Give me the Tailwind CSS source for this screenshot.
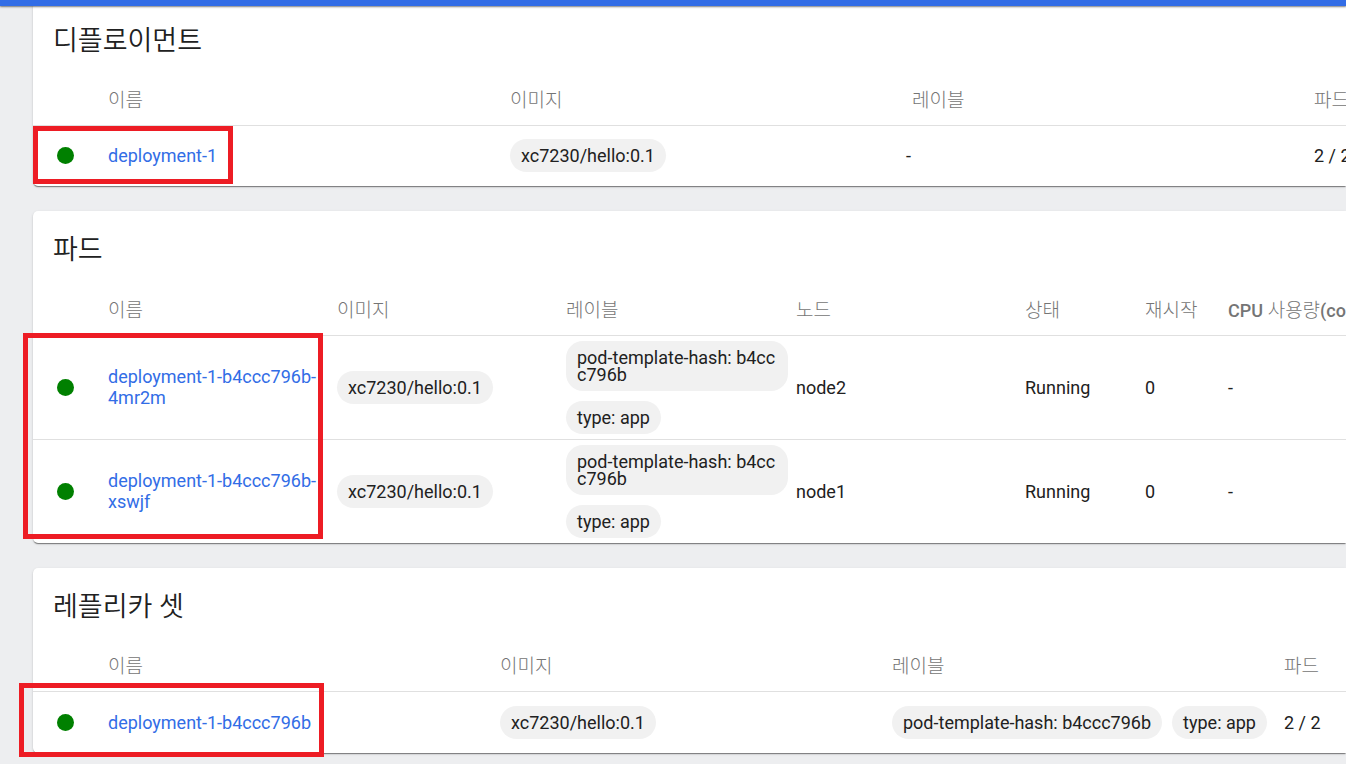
<!DOCTYPE html>
<html lang="ko">
<head>
<meta charset="utf-8">
<meta name="viewport" content="width=device-width, initial-scale=1">
<title>Kubernetes Dashboard</title>
<script src="https://cdn.jsdelivr.net/npm/@tailwindcss/browser@4"></script>
</head>
<body class="relative h-screen overflow-hidden bg-[#edeef0] font-[Roboto,'Noto_Sans_CJK_KR',sans-serif] text-[18px] leading-[21px] text-[#212121]">
<header class="absolute inset-x-0 top-0 z-10 h-[6px] bg-[#326de6] shadow-[0_1px_2px_rgba(0,0,0,0.5)]"></header>
<main class="flex flex-col gap-[25px] pt-[2px] pl-[33px]">

  <section class="relative rounded-l-[5px] bg-white shadow-[0_2px_1px_-1px_rgba(0,0,0,0.3),0_1px_1px_rgba(0,0,0,0.2),0_1px_3px_rgba(0,0,0,0.12)]">
    <h2 class="flex h-[74px] items-center pt-1 pl-5 text-[27px] font-[350]">디플로이먼트</h2>
    <div class="overflow-hidden">
      <table class="w-[1440px] table-fixed border-collapse text-left">
        <colgroup><col class="w-[75px]"><col class="w-[402px]"><col class="w-[396px]"><col class="w-[408px]"><col></colgroup>
        <thead class="text-[19px] text-[#757575]">
          <tr class="h-[49px] border-b border-[#e0e0e0]"><td></td><th class="font-light">이름</th><th class="font-light">이미지</th><th class="pl-[6px] font-light">레이블</th><th class="font-light">파드</th></tr>
        </thead>
        <tbody>
          <tr class="h-[61px]">
            <td class="pl-6"><span class="block size-[17px] rounded-full bg-[#008000]"></span></td>
            <td><a href="#" class="text-[#326de6]">deployment-1</a></td>
            <td><span class="block w-fit rounded-[17px] bg-[#f1f1f1] px-[11px] py-2 leading-[17px]">xc7230/hello:0.1</span></td>
            <td>-</td>
            <td>2 / 2</td>
          </tr>
        </tbody>
      </table>
    </div>
    <div class="pointer-events-none absolute top-[124px] left-0 h-[58px] w-[200px] border-5 border-[#ed1c24]"></div>
  </section>

  <section class="relative rounded-l-[5px] bg-white shadow-[0_2px_1px_-1px_rgba(0,0,0,0.3),0_1px_1px_rgba(0,0,0,0.2),0_1px_3px_rgba(0,0,0,0.12)]">
    <h2 class="flex h-[75px] items-center pt-1 pl-5 text-[27px] font-[350]">파드</h2>
    <div class="overflow-hidden">
      <table class="w-[1440px] table-fixed border-collapse text-left">
        <colgroup><col class="w-[75px]"><col class="w-[229px]"><col class="w-[229px]"><col class="w-[230px]"><col class="w-[229px]"><col class="w-[120px]"><col class="w-[83px]"><col></colgroup>
        <thead class="text-[19px] text-[#757575]">
          <tr class="h-[49px] border-b border-[#e0e0e0]"><td></td><th class="font-light">이름</th><th class="font-light">이미지</th><th class="font-light">레이블</th><th class="font-light">노드</th><th class="font-light">상태</th><th class="font-light">재시작</th><th class="font-light whitespace-nowrap"><span class="text-[18px] font-medium">CPU</span> 사용량<span class="text-[18px] font-medium">(cores)</span></th></tr>
        </thead>
        <tbody>
          <tr class="h-[104px] border-b border-[#e0e0e0]">
            <td class="pl-6"><span class="block size-[17px] rounded-full bg-[#008000]"></span></td>
            <td class="pr-[10px]"><a href="#" class="text-[#326de6]">deployment-1-b4ccc796b-<br>4mr2m</a></td>
            <td><span class="block w-fit rounded-[17px] bg-[#f1f1f1] px-[11px] py-2 leading-[17px]">xc7230/hello:0.1</span></td>
            <td class="pr-2"><div class="flex flex-col items-start gap-[10px]"><span class="rounded-[17px] bg-[#f1f1f1] px-[11px] py-2 leading-[17px] break-all">pod-template-hash: b4ccc796b</span><span class="rounded-[17px] bg-[#f1f1f1] px-[11px] py-2 leading-[17px]">type: app</span></div></td>
            <td>node2</td><td>Running</td><td>0</td><td>-</td>
          </tr>
          <tr class="h-[104px]">
            <td class="pl-6"><span class="block size-[17px] rounded-full bg-[#008000]"></span></td>
            <td class="pr-[10px]"><a href="#" class="text-[#326de6]">deployment-1-b4ccc796b-<br>xswjf</a></td>
            <td><span class="block w-fit rounded-[17px] bg-[#f1f1f1] px-[11px] py-2 leading-[17px]">xc7230/hello:0.1</span></td>
            <td class="pr-2"><div class="flex flex-col items-start gap-[10px]"><span class="rounded-[17px] bg-[#f1f1f1] px-[11px] py-2 leading-[17px] break-all">pod-template-hash: b4ccc796b</span><span class="rounded-[17px] bg-[#f1f1f1] px-[11px] py-2 leading-[17px]">type: app</span></div></td>
            <td>node1</td><td>Running</td><td>0</td><td>-</td>
          </tr>
        </tbody>
      </table>
    </div>
    <div class="pointer-events-none absolute top-[122px] -left-[10px] h-[206px] w-[300px] border-5 border-[#ed1c24]"></div>
  </section>

  <section class="relative rounded-l-[5px] bg-white shadow-[0_2px_1px_-1px_rgba(0,0,0,0.3),0_1px_1px_rgba(0,0,0,0.2),0_1px_3px_rgba(0,0,0,0.12)]">
    <h2 class="flex h-[74px] items-center pt-1 pl-5 text-[27px] font-[350]">레플리카 셋</h2>
    <div class="overflow-hidden">
      <table class="w-[1440px] table-fixed border-collapse text-left">
        <colgroup><col class="w-[75px]"><col class="w-[392px]"><col class="w-[392px]"><col class="w-[392px]"><col></colgroup>
        <thead class="text-[19px] text-[#757575]">
          <tr class="h-[49px] border-b border-[#e0e0e0]"><td></td><th class="font-light">이름</th><th class="font-light">이미지</th><th class="font-light">레이블</th><th class="font-light">파드</th></tr>
        </thead>
        <tbody>
          <tr class="h-[62px]">
            <td class="pl-6"><span class="block size-[17px] rounded-full bg-[#008000]"></span></td>
            <td><a href="#" class="text-[#326de6]">deployment-1-b4ccc796b</a></td>
            <td><span class="block w-fit rounded-[17px] bg-[#f1f1f1] px-[11px] py-2 leading-[17px]">xc7230/hello:0.1</span></td>
            <td><div class="flex gap-[10px] whitespace-nowrap"><span class="rounded-[17px] bg-[#f1f1f1] px-[11px] py-2 leading-[17px]">pod-template-hash: b4ccc796b</span><span class="rounded-[17px] bg-[#f1f1f1] px-[11px] py-2 leading-[17px]">type: app</span></div></td>
            <td>2 / 2</td>
          </tr>
        </tbody>
      </table>
    </div>
    <div class="pointer-events-none absolute top-[115px] -left-[14px] h-[74px] w-[305px] border-5 border-[#ed1c24]"></div>
  </section>

</main>
</body>
</html>
